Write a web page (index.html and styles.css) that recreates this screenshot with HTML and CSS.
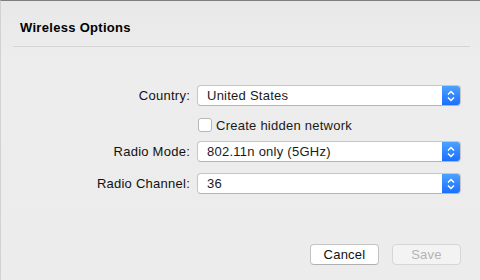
FILE: index.html
```html
<!DOCTYPE html>
<html lang="en">
<head>
  <meta charset="UTF-8">
  <title>Wireless Options</title>
  <link rel="stylesheet" href="styles.css">
</head>
<body>
  <div class="sheet">
    <div class="sheet-header">
      <h1>Wireless Options</h1>
    </div>

    <div class="form-grid">
      <label class="field-label">Country:</label>
      <div class="popup">
        <span class="popup-value">United States</span>
        <span class="stepper">
          <svg width="8" height="12" viewBox="0 0 8 12"><path d="M1 4.5 L4 1.5 L7 4.5 M1 7.5 L4 10.5 L7 7.5" fill="none" stroke="#fff" stroke-width="1.5"/></svg>
        </span>
      </div>

      <span></span>
      <label class="check-row">
        <span class="checkbox"></span>
        Create hidden network
      </label>

      <label class="field-label">Radio Mode:</label>
      <div class="popup">
        <span class="popup-value">802.11n only (5GHz)</span>
        <span class="stepper">
          <svg width="8" height="12" viewBox="0 0 8 12"><path d="M1 4.5 L4 1.5 L7 4.5 M1 7.5 L4 10.5 L7 7.5" fill="none" stroke="#fff" stroke-width="1.5"/></svg>
        </span>
      </div>

      <label class="field-label">Radio Channel:</label>
      <div class="popup">
        <span class="popup-value">36</span>
        <span class="stepper">
          <svg width="8" height="12" viewBox="0 0 8 12"><path d="M1 4.5 L4 1.5 L7 4.5 M1 7.5 L4 10.5 L7 7.5" fill="none" stroke="#fff" stroke-width="1.5"/></svg>
        </span>
      </div>
    </div>

    <div class="sheet-footer">
      <button class="btn">Cancel</button>
      <button class="btn btn-disabled">Save</button>
    </div>
  </div>
</body>
</html>
```

FILE: styles.css
```css
* {
  margin: 0;
  padding: 0;
  box-sizing: border-box;
}

body {
  font-family: 'Liberation Sans', Arial, sans-serif;
  font-size: 13px;
  letter-spacing: 0.25px;
  color: #1a1a1a;
  background: #ececec;
}

.sheet {
  height: 280px;
  display: flex;
  flex-direction: column;
  border-top: 1px solid #7c7c7c;
  border-left: 1px solid #d2d2d2;
  background: linear-gradient(#e8e8e8, #ededed 60px, #ececec);
}

.sheet-header {
  margin: 0 10px 0 12px;
  padding: 18px 0 10px 7px;
  border-bottom: 1px solid #d4d4d4;
}

h1 {
  font-size: 13px;
  font-weight: bold;
  line-height: 17px;
  letter-spacing: 0.3px;
  color: #000;
}

.form-grid {
  display: grid;
  grid-template-columns: 189px 264px;
  column-gap: 7px;
  row-gap: 11px;
  margin-top: 38px;
  align-items: center;
}

.field-label {
  text-align: right;
  color: #111;
}

.popup {
  height: 21px;
  display: flex;
  align-items: stretch;
  background: #fff;
  border: 1px solid #c6c6c6;
  border-bottom-color: #b4b4b4;
  border-radius: 4px;
  overflow: hidden;
}

.popup-value {
  flex: 1;
  padding-left: 9px;
  line-height: 19px;
}

.stepper {
  width: 18px;
  display: flex;
  align-items: center;
  justify-content: center;
  background: linear-gradient(#4da1ff, #1a6fff);
}

.check-row {
  display: flex;
  align-items: center;
  gap: 4px;
  height: 14px;
  margin: 1px 0 -2px 1px;
}

.checkbox {
  width: 14px;
  height: 14px;
  background: #fff;
  border: 1px solid #b8b8b8;
  border-radius: 3px;
}

.sheet-footer {
  margin-top: auto;
  margin-bottom: 15px;
  display: flex;
  justify-content: flex-end;
  gap: 13px;
  padding-right: 19px;
}

.btn {
  width: 69px;
  height: 21px;
  font-family: inherit;
  font-size: 13px;
  letter-spacing: 0.25px;
  color: #111;
  background: #fff;
  border: 1px solid #c4c4c4;
  border-bottom-color: #b0b0b0;
  border-radius: 4px;
}

.btn-disabled {
  color: #b4b4b4;
  background: #f3f3f3;
  border-color: #d6d6d6;
}
```
